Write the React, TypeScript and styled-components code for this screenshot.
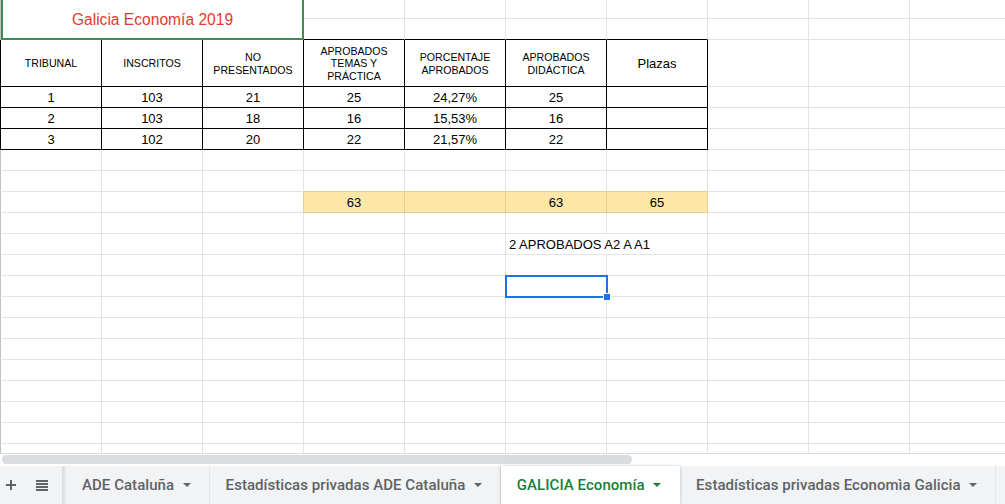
import styled, {createGlobalStyle} from "styled-components";

const GRID = "#e2e3e3";
const EDGE = "#c0c0c0";
const INK = "#000000";
const TINT = "#e6cf8c";
const YELLOW = "#fce7a8";

const GlobalStyle = createGlobalStyle`
    html, body {
        margin: 0;
        padding: 0;
        background: #ffffff;
        overflow: hidden;
    }
    body {
        font-family: "Liberation Sans", Arial, sans-serif;
    }
`;

const Page = styled.div`
    width: 1005px;
    height: 504px;
    display: flex;
    flex-direction: column;
    overflow: hidden;
`;

const Viewport = styled.div`
    height: 453px;
    overflow: hidden;
`;

const Sheet = styled.div`
    margin-top: -2px;
    display: grid;
    grid-template-columns: 102px repeat(9, 101px);
    grid-template-rows: 21px 21px 47px repeat(18, 21px);
`;

const Cell = styled.div<{$r: string; $b: string; $l?: string; $bg?: string; $left?: boolean}>`
    box-sizing: border-box;
    position: relative;
    display: flex;
    align-items: center;
    justify-content: ${p => p.$left ? "flex-start" : "center"};
    padding: 0 3px;
    border-right: 1px solid ${p => p.$r};
    border-bottom: 1px solid ${p => p.$b};
    border-left: ${p => p.$l ? `1px solid ${p.$l}` : "none"};
    background: ${p => p.$bg || "transparent"};
    font-size: 13px;
    color: #000;
    white-space: nowrap;
    overflow: visible;
`;

const HeadCell = styled(Cell)`
    font-size: 10.6px;
    line-height: 12.3px;
    text-align: center;
    white-space: pre-line;
    padding-top: 1px;
`;

const SelectedCell = styled(Cell)`
    &::after {
        content: "";
        position: absolute;
        top: -1px;
        left: -1px;
        right: -2px;
        bottom: -2px;
        border: 2px solid #1a73e8;
        z-index: 1;
    }
    &::before {
        content: "";
        position: absolute;
        right: -5px;
        bottom: -5px;
        width: 6px;
        height: 6px;
        background: #1a73e8;
        border: 1px solid #fff;
        z-index: 2;
    }
`;

const Title = styled.div`
    grid-column: 1 / span 3;
    grid-row: 1 / span 2;
    box-sizing: border-box;
    display: flex;
    align-items: center;
    justify-content: center;
    padding-top: 2px;
    border-left: 1px solid ${EDGE};
    box-shadow: inset 2px 0 0 #3b8c4d, inset -2px 0 0 #3b8c4d, inset 0 -2px 0 #3b8c4d;
    color: #e53a2f;
    font-size: 15.6px;
`;

const ScrollTrack = styled.div`
    height: 13px;
    box-sizing: border-box;
    border-top: 1px solid #dcdcdc;
    padding: 1px 0 0 2px;
`;

const Thumb = styled.div`
    width: 630px;
    height: 9px;
    border-radius: 5px;
    background: #dadce0;
`;

const TabBar = styled.div`
    flex: 1;
    display: flex;
    align-items: stretch;
    background: #f1f3f4;
    font-family: Roboto, "Noto Sans", sans-serif;
`;

const Tools = styled.div`
    width: 62px;
    display: flex;
    align-items: center;
    gap: 19px;
    padding-left: 5px;
    box-sizing: border-box;
`;

const Shade = styled.div`
    width: 4px;
    background: linear-gradient(to right, #d6d8db, #eceef0);
`;

const Tab = styled.div<{$active?: boolean}>`
    display: flex;
    align-items: center;
    gap: 8.5px;
    padding: 0 18px 0 16px;
    font-size: 15px;
    font-weight: 500;
    letter-spacing: 0.05px;
    white-space: nowrap;
    color: ${p => p.$active ? "#188038" : "#5f6368"};
    background: ${p => p.$active ? "#ffffff" : "transparent"};
    border-right: 1px solid ${p => p.$active ? "transparent" : "#e3e5e8"};
    box-shadow: ${p => p.$active ? "0 0 3px rgba(60, 64, 67, 0.3)" : "none"};
`;

function Caret() {
    return (
        <svg width="8" height="4" viewBox="0 0 8 4">
            <path d="M0 0h8L4 4z" fill="currentColor"/>
        </svg>
    );
}

function PlusIcon() {
    return (
        <svg width="12" height="12" viewBox="0 0 12 12">
            <path d="M5 1h2v4h4v2H7v4H5V7H1V5h4z" fill="#5f6368"/>
        </svg>
    );
}

function ListIcon() {
    return (
        <svg width="12" height="12" viewBox="0 0 12 12">
            <rect x="0" y="1" width="12" height="2" fill="#5f6368"/>
            <rect x="0" y="4" width="12" height="2" fill="#5f6368"/>
            <rect x="0" y="7" width="12" height="2" fill="#5f6368"/>
            <rect x="0" y="10" width="12" height="2" fill="#5f6368"/>
        </svg>
    );
}

const headers = [
    "TRIBUNAL",
    "INSCRITOS",
    "NO\nPRESENTADOS",
    "APROBADOS\nTEMAS Y\nPRÁCTICA",
    "PORCENTAJE\nAPROBADOS",
    "APROBADOS\nDIDÁCTICA",
];

const results = [
    ["1", "103", "21", "25", "24,27%", "25", ""],
    ["2", "103", "18", "16", "15,53%", "16", ""],
    ["3", "102", "20", "22", "21,57%", "22", ""],
];

const totals: Record<number, string> = {3: "63", 5: "63", 6: "65"};

const ROWS = 21;
const COLS = 10;

const inTable = (r: number, c: number) => r >= 2 && r <= 5 && c <= 6;
const isYellow = (r: number, c: number) => r === 8 && c >= 3 && c <= 6;

function rightColor(r: number, c: number) {
    if (inTable(r, c)) return INK;
    if (r === 8 && c >= 2 && c <= 6) return TINT;
    if (r === 10 && c === 5) return "transparent";
    return GRID;
}

function bottomColor(r: number, c: number) {
    if (r === 1 && c >= 3 && c <= 6) return INK;
    if (inTable(r, c)) return INK;
    if ((r === 7 || r === 8) && c >= 3 && c <= 6) return TINT;
    return GRID;
}

function textFor(r: number, c: number) {
    if (r >= 3 && r <= 5 && c <= 6) return results[r - 3][c];
    if (r === 8) return totals[c] || "";
    return "";
}

export default function App() {
    const cells = [];
    for (let r = 0; r < ROWS; r++) {
        for (let c = 0; c < COLS; c++) {
            if (r <= 1 && c <= 2) continue;
            const props = {
                key: `${r}-${c}`,
                $r: rightColor(r, c),
                $b: bottomColor(r, c),
                $l: c === 0 ? (inTable(r, c) ? INK : EDGE) : undefined,
                $bg: isYellow(r, c) ? YELLOW : undefined,
            };
            if (r === 2 && c <= 5) {
                cells.push(<HeadCell {...props}>{headers[c]}</HeadCell>);
            } else if (r === 2 && c === 6) {
                cells.push(<Cell {...props}>Plazas</Cell>);
            } else if (r === 10 && c === 5) {
                cells.push(<Cell {...props} $left>2 APROBADOS A2 A A1</Cell>);
            } else if (r === 12 && c === 5) {
                cells.push(<SelectedCell {...props}/>);
            } else {
                cells.push(<Cell {...props}>{textFor(r, c)}</Cell>);
            }
        }
    }

    return (
        <Page>
            <GlobalStyle/>
            <Viewport>
                <Sheet>
                    <Title>Galicia Economía 2019</Title>
                    {cells}
                </Sheet>
            </Viewport>
            <ScrollTrack>
                <Thumb/>
            </ScrollTrack>
            <TabBar>
                <Tools>
                    <PlusIcon/>
                    <ListIcon/>
                </Tools>
                <Shade/>
                <Tab>ADE Cataluña <Caret/></Tab>
                <Tab>Estadísticas privadas ADE Cataluña <Caret/></Tab>
                <Tab $active>GALICIA Economía <Caret/></Tab>
                <Tab>Estadísticas privadas Economìa Galicia <Caret/></Tab>
            </TabBar>
        </Page>
    );
}
